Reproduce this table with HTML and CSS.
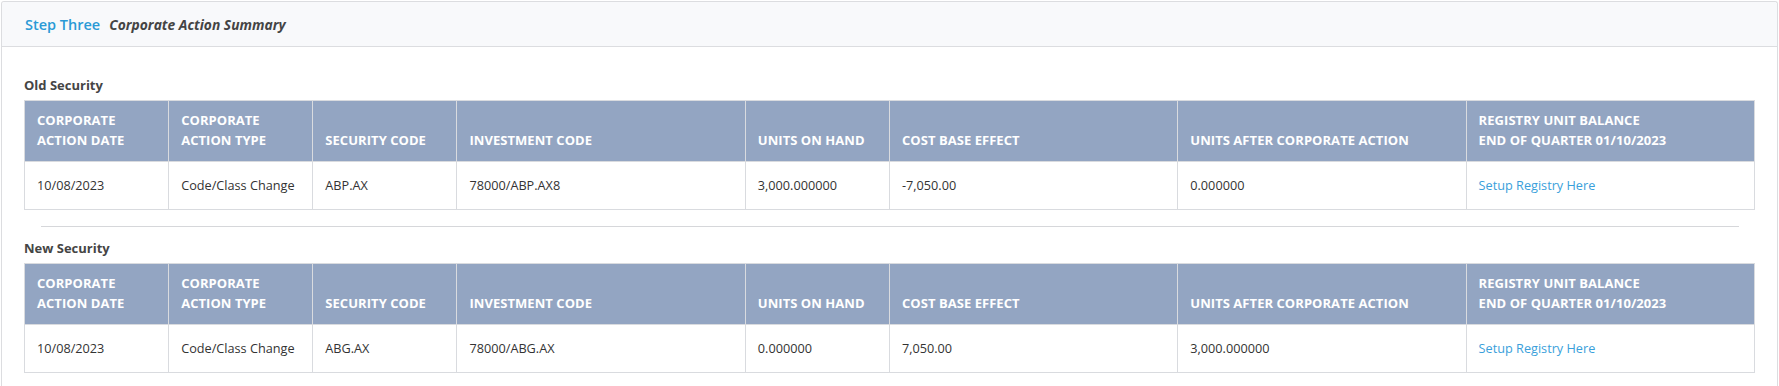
FILE: index.html
```html
<!DOCTYPE html>
<html lang="en">
<head>
<meta charset="utf-8">
<title>Step Three</title>
<link rel="stylesheet" href="styles.css">
</head>
<body>
<div class="card">
  <div class="card-header">
    <span class="step">Step Three</span>
    <span class="step-desc">Corporate Action Summary</span>
  </div>
  <div class="card-body">
    <div class="section-title">Old Security</div>
    <table class="ca-table">
      <colgroup>
        <col class="c1"><col class="c1"><col class="c1"><col class="c2"><col class="c1"><col class="c2"><col class="c2"><col class="c2">
      </colgroup>
      <thead>
        <tr>
          <th>Corporate<br>Action Date</th>
          <th>Corporate<br>Action Type</th>
          <th>Security Code</th>
          <th>Investment Code</th>
          <th>Units on Hand</th>
          <th>Cost Base Effect</th>
          <th>Units After Corporate Action</th>
          <th>Registry Unit Balance<br>End of Quarter 01/10/2023</th>
        </tr>
      </thead>
      <tbody>
        <tr>
          <td>10/08/2023</td>
          <td>Code/Class Change</td>
          <td>ABP.AX</td>
          <td>78000/ABP.AX8</td>
          <td>3,000.000000</td>
          <td>-7,050.00</td>
          <td>0.000000</td>
          <td><a class="link" href="#">Setup Registry Here</a></td>
        </tr>
      </tbody>
    </table>
    <hr class="divider">
    <div class="section-title">New Security</div>
    <table class="ca-table">
      <colgroup>
        <col class="c1"><col class="c1"><col class="c1"><col class="c2"><col class="c1"><col class="c2"><col class="c2"><col class="c2">
      </colgroup>
      <thead>
        <tr>
          <th>Corporate<br>Action Date</th>
          <th>Corporate<br>Action Type</th>
          <th>Security Code</th>
          <th>Investment Code</th>
          <th>Units on Hand</th>
          <th>Cost Base Effect</th>
          <th>Units After Corporate Action</th>
          <th>Registry Unit Balance<br>End of Quarter 01/10/2023</th>
        </tr>
      </thead>
      <tbody>
        <tr>
          <td>10/08/2023</td>
          <td>Code/Class Change</td>
          <td>ABG.AX</td>
          <td>78000/ABG.AX</td>
          <td>0.000000</td>
          <td>7,050.00</td>
          <td>3,000.000000</td>
          <td><a class="link" href="#">Setup Registry Here</a></td>
        </tr>
      </tbody>
    </table>
  </div>
</div>
</body>
</html>
```

FILE: styles.css
```css
* { box-sizing: border-box; }
html, body { margin: 0; padding: 0; background: #ffffff; }
body {
  padding: 1px 1px 0 1px;
  font-family: "Open Sans", "Liberation Sans", sans-serif;
  color: #333333;
}
.card {
  border: 1px solid #dcdde0;
  border-bottom: none;
  border-radius: 3px 3px 0 0;
  background: #ffffff;
  min-height: 385px;
}
.card-header {
  height: 45px;
  background: #f8f9fb;
  border-bottom: 1px solid #dcdde0;
  padding: 0 23px;
  display: flex;
  align-items: center;
  gap: 9px;
  border-radius: 3px 3px 0 0;
}
.step {
  color: #2a9ad6;
  font-size: 14.5px;
  font-weight: 600;
}
.step-desc {
  color: #444444;
  font-size: 13.8px;
  font-weight: 700;
  font-style: italic;
}
.card-body {
  padding: 28px 22px 0 22px;
}
.section-title {
  font-size: 13px;
  font-weight: 700;
  line-height: 20px;
  color: #454545;
  margin-bottom: 5px;
}
.ca-table {
  width: 100%;
  border-collapse: collapse;
  table-layout: fixed;
  font-size: 12.7px;
}
.ca-table col.c1 { width: 8.333%; }
.ca-table col.c2 { width: 16.667%; }
.ca-table th {
  background: #93a5c2;
  color: #ffffff;
  font-size: 13px;
  font-weight: 700;
  letter-spacing: 0.05px;
  text-transform: uppercase;
  text-align: left;
  vertical-align: bottom;
  line-height: 20px;
  padding: 9px 12px 11px 12px;
  border: 1px solid #d9dbdf;
  white-space: nowrap;
}
.ca-table td {
  line-height: 20px;
  padding: 13px 12px 14px 12px;
  border: 1px solid #d9dbdf;
  color: #333333;
  vertical-align: middle;
}
.link {
  color: #3a9fdb;
  text-decoration: none;
}
.divider {
  border: none;
  border-top: 1px solid #d6d7da;
  height: 0;
  margin: 16px 16px 11px 17px;
}
```
